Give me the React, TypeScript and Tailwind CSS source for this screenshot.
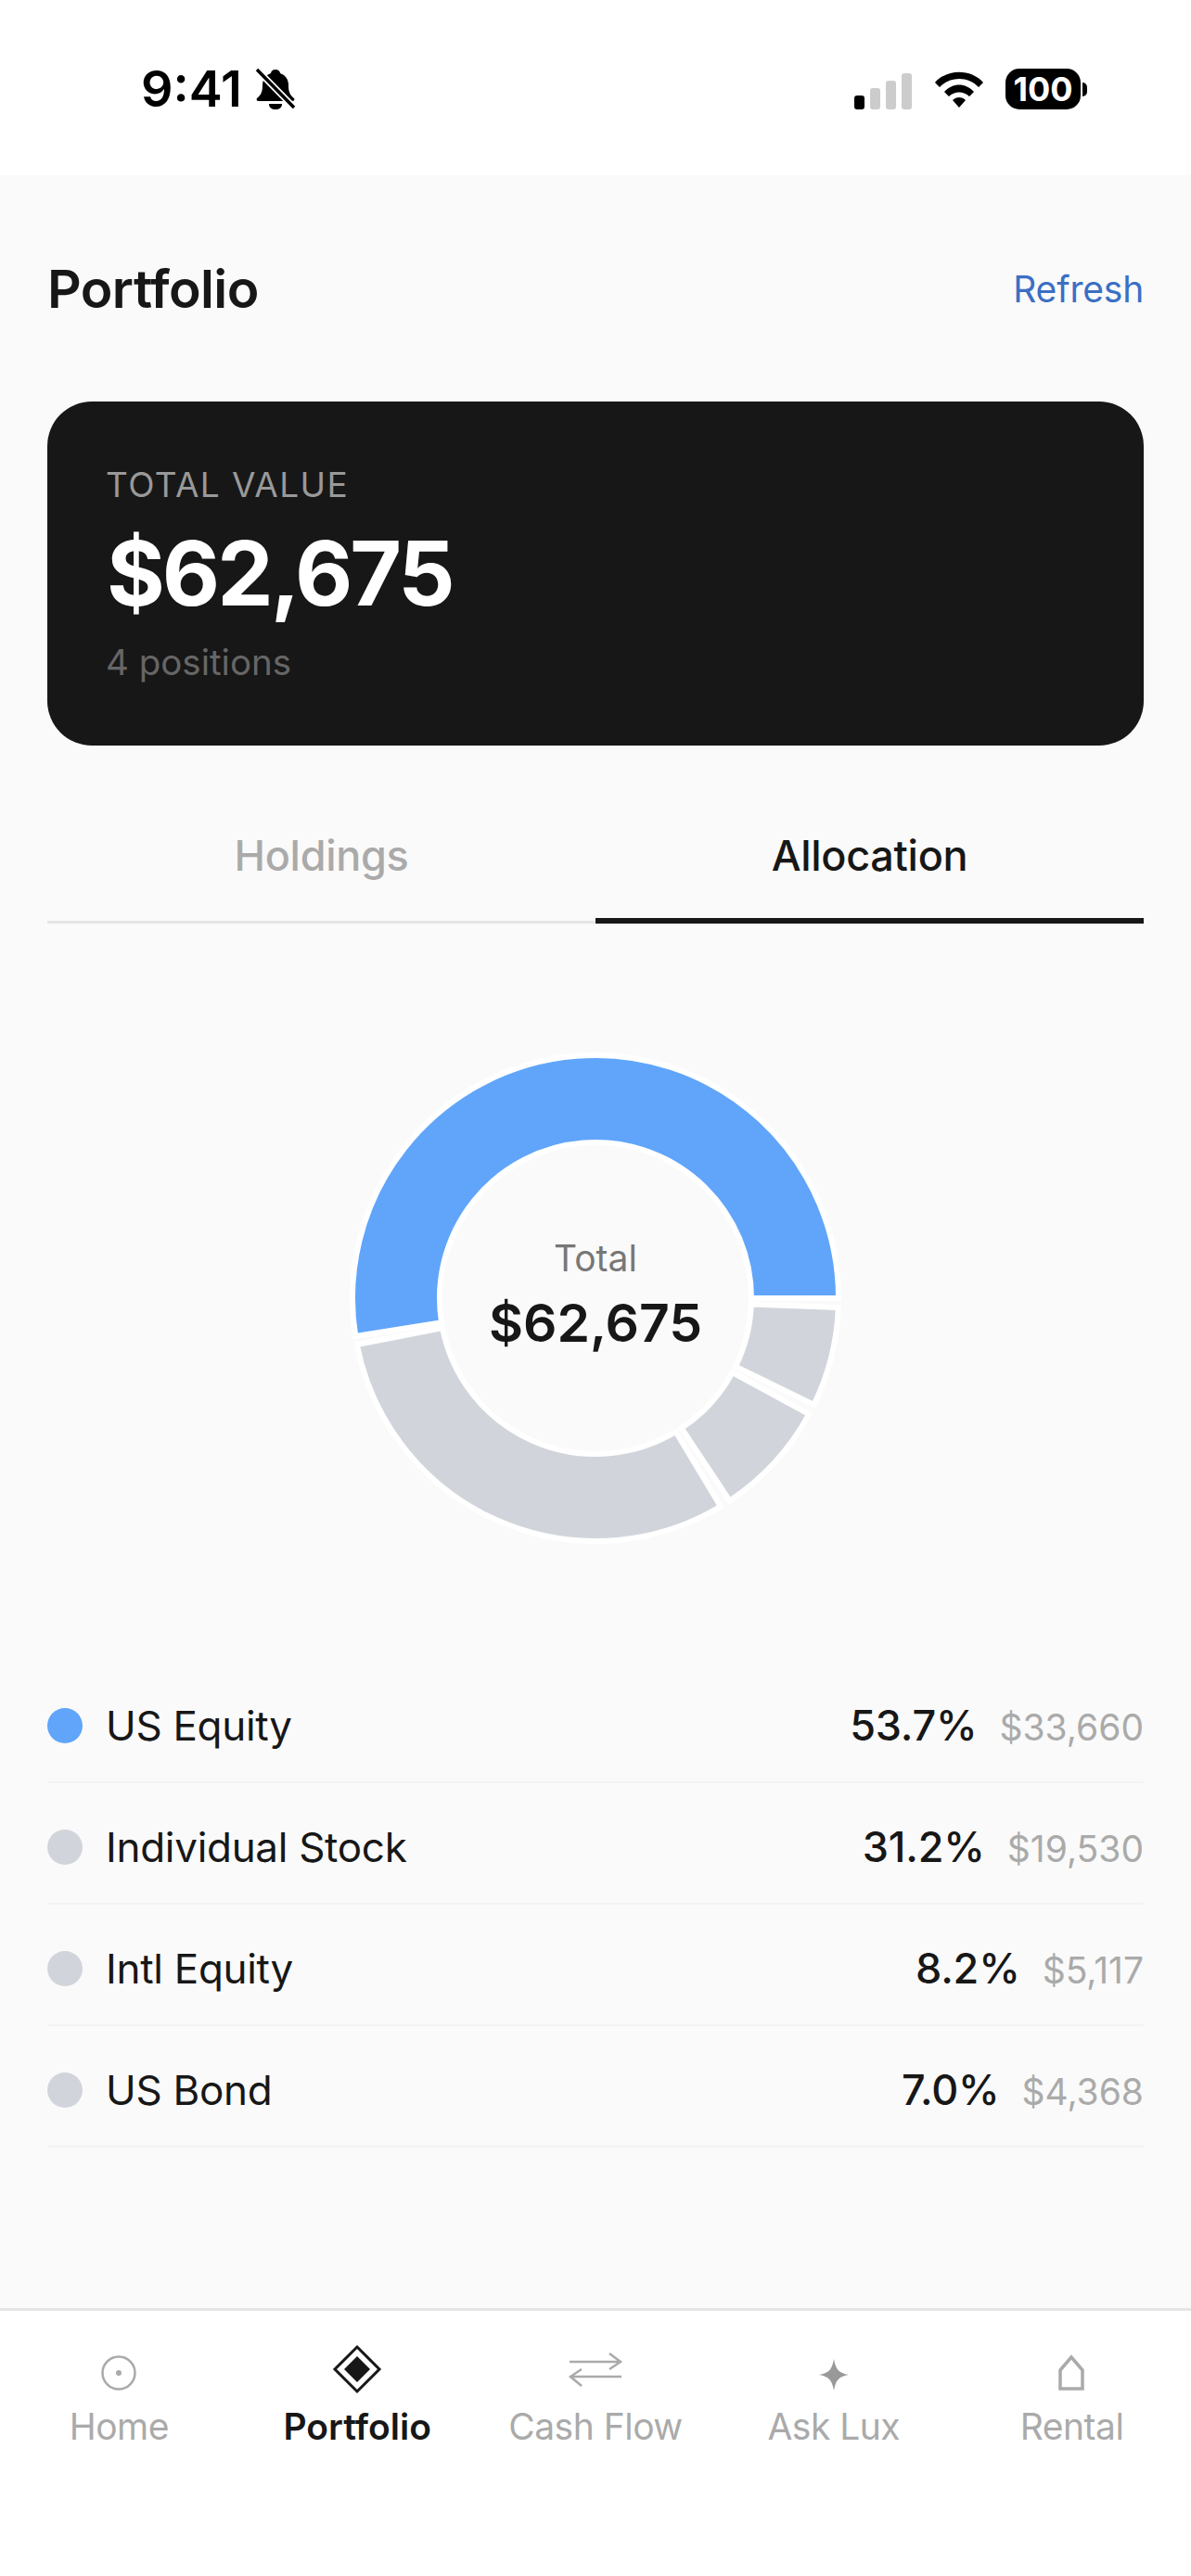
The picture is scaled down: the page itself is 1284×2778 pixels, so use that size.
const polar = (r: number, deg: number) => {
  const a = (deg * Math.PI) / 180
  return [284 + r * Math.cos(a), 284 - r * Math.sin(a)]
}

// counter-clockwise from 3 o'clock, like the chart in the app
const arc = (from: number, to: number) => {
  const R = 262
  const r = 168
  const large = to - from > 180 ? 1 : 0
  const [x1, y1] = polar(R, from)
  const [x2, y2] = polar(R, to)
  const [x3, y3] = polar(r, to)
  const [x4, y4] = polar(r, from)
  return `M${x1} ${y1}A${R} ${R} 0 ${large} 0 ${x2} ${y2}L${x3} ${y3}A${r} ${r} 0 ${large} 1 ${x4} ${y4}Z`
}

const segments = [
  { from: 0, to: 189, color: '#60a5fa' },
  { from: 191, to: 301, color: '#d1d5db' },
  { from: 303.5, to: 331.5, color: '#d1d5db' },
  { from: 334, to: 357.8, color: '#d1d5db' },
]

const rows = [
  { name: 'US Equity', pct: '53.7%', value: '$33,660', dot: 'bg-[#60a5fa]' },
  { name: 'Individual Stock', pct: '31.2%', value: '$19,530', dot: 'bg-[#d1d5db]' },
  { name: 'Intl Equity', pct: '8.2%', value: '$5,117', dot: 'bg-[#d1d5db]' },
  { name: 'US Bond', pct: '7.0%', value: '$4,368', dot: 'bg-[#d1d5db]' },
]

const StatusBar = () => (
  <div className="h-[189px] bg-white flex items-start justify-between pt-[70px] pl-[152px] pr-[112px] shrink-0">
    <div className="flex items-center gap-[14px] h-[52px]">
      <span className="text-[54px] font-semibold leading-none text-black">9:41</span>
      <svg width="44" height="46" viewBox="0 0 44 46">
        <path d="M22 2c-3 0-5 2-5 4-6 2-9 7-9 13 0 6-1 10-6 14-1 2 0 3 2 3h36c2 0 3-1 2-3-5-4-6-8-6-14 0-6-3-11-9-13 0-2-2-4-5-4z" fill="#000" />
        <path d="M15 39h14c0 4-3 6-7 6s-7-2-7-6z" fill="#000" />
        <path d="M2 2l40 41" stroke="#fff" strokeWidth="7" />
        <path d="M2 2l40 41" stroke="#000" strokeWidth="3.5" />
      </svg>
    </div>
    <div className="flex items-center h-[52px]">
      <div className="flex items-end gap-[6px] h-[40px] mt-[4px]">
        <div className="w-[11px] h-[15px] rounded-[3px] bg-black" />
        <div className="w-[11px] h-[23px] rounded-[3px] bg-[#cccccc]" />
        <div className="w-[11px] h-[31px] rounded-[3px] bg-[#cccccc]" />
        <div className="w-[11px] h-[39px] rounded-[3px] bg-[#cccccc]" />
      </div>
      <svg className="ml-[24px]" width="54" height="40" viewBox="0 0 54 40">
        <path d="M1 13C14 -2 40 -2 53 13l-5 5C37 6 17 6 6 18z" fill="#000" />
        <path d="M11 23c9-10 23-10 32 0l-5 5c-6-6-16-6-22 0z" fill="#000" />
        <path d="M20 32c4-4 10-4 14 0l-7 8z" fill="#000" />
      </svg>
      <div className="ml-[23px] w-[81px] h-[44px] rounded-[15px] bg-black flex items-center justify-center text-white text-[36px] font-bold leading-none">
        100
      </div>
      <div className="ml-[2px] w-[5px] h-[15px] rounded-r-full bg-black" />
    </div>
  </div>
)

const Donut = () => (
  <div className="relative w-[536px] h-[536px]">
    <svg viewBox="0 0 568 568" className="w-[568px] h-[568px] -m-[16px]">
      {segments.map((s) => (
        <path key={s.from} d={arc(s.from, s.to)} fill={s.color} stroke="#ffffff" strokeWidth="6" />
      ))}
    </svg>
    <div className="absolute inset-0 flex flex-col items-center justify-center pb-[6px]">
      <span className="text-[39px] leading-[48px] text-[#777777]">Total</span>
      <span className="text-[57px] leading-[68px] mt-[12px] font-semibold text-[#171717]">$62,675</span>
    </div>
  </div>
)

const NavIcon = ({ name }: { name: string }) => {
  if (name === 'Home')
    return (
      <svg width="60" height="70" viewBox="0 0 60 70">
        <circle cx="30" cy="37" r="17.5" fill="none" stroke="#aaaaaa" strokeWidth="2.5" />
        <circle cx="30" cy="37" r="3" fill="#aaaaaa" />
      </svg>
    )
  if (name === 'Portfolio')
    return (
      <svg width="60" height="70" viewBox="0 0 60 70">
        <path d="M30 9L54 33 30 57 6 33z" fill="none" stroke="#171717" strokeWidth="3" />
        <path d="M30 19L44 33 30 47 16 33z" fill="#171717" />
      </svg>
    )
  if (name === 'Cash Flow')
    return (
      <svg width="60" height="70" viewBox="0 0 60 70">
        <path d="M2 25h54M45 16l12 9-12 8M58 41H4M15 33L3 41l12 10" fill="none" stroke="#aaaaaa" strokeWidth="2.5" />
      </svg>
    )
  if (name === 'Ask Lux')
    return (
      <svg width="60" height="70" viewBox="0 0 60 70">
        <path d="M30 22C32 33 35 37 46 39 35 41 32 45 30 56 28 45 25 41 14 39 25 37 28 33 30 22z" fill="#999999" />
      </svg>
    )
  return (
    <svg width="60" height="70" viewBox="0 0 60 70">
      <path d="M29 20L17 34V54H41V34z" fill="none" stroke="#aaaaaa" strokeWidth="3.5" />
    </svg>
  )
}

const tabs = ['Home', 'Portfolio', 'Cash Flow', 'Ask Lux', 'Rental']

export default function App() {
  return (
    <div className="w-[1284px] h-[2778px] flex flex-col bg-[#fafafa]" style={{ fontFamily: 'Inter, sans-serif' }}>
      <StatusBar />
      <div className="flex-1 px-[51px]">
        <div className="flex items-center justify-between h-[86px] mt-[79px]">
          <h1 className="text-[57px] font-semibold leading-none tracking-[-0.6px] text-[#171717]">Portfolio</h1>
          <button className="text-[39px] leading-none tracking-[-0.2px] text-[#3b6fc4]">Refresh</button>
        </div>
        <div className="mt-[79px] h-[371px] rounded-[48px] bg-[#171717] pl-[64px] pt-[67px]">
          <div className="-ml-[1px] text-[37px] leading-[46px] tracking-[1.4px] text-[#999999]">TOTAL VALUE</div>
          <div className="text-[96px] leading-[110px] mt-[17px] font-bold tracking-[-3px] text-white">$62,675</div>
          <div className="-ml-[1px] text-[38.5px] leading-[46px] mt-[18px] text-[#666666]">4 positions</div>
        </div>
        <div className="flex h-[192px]">
          <div className="flex-1 flex items-center justify-center border-b-[3px] border-[#e5e5e5] text-[45px] font-medium tracking-[-0.3px] text-[#aaaaaa] pt-[48px]">
            Holdings
          </div>
          <div className="flex-1 flex items-center justify-center border-b-[6px] border-[#171717] text-[45px] font-medium tracking-[-0.3px] text-[#171717] pt-[51px]">
            Allocation
          </div>
        </div>
        <div className="flex justify-center mt-[136px]">
          <Donut />
        </div>
        <div className="mt-[124px]">
          {rows.map((r) => (
            <div key={r.name} className="h-[131px] flex items-center justify-between border-b-[2px] border-[#f3f3f3] pt-[9px]">
              <div className="flex items-center gap-[25px]">
                <div className={`w-[38px] h-[38px] rounded-full ${r.dot}`} />
                <span className="text-[44px] tracking-[-0.3px] text-[#171717]">{r.name}</span>
              </div>
              <div className="flex items-baseline gap-[24px]">
                <span className="text-[45px] font-medium tracking-[-0.2px] text-[#171717]">{r.pct}</span>
                <span className="text-[39px] text-[#aaaaaa]">{r.value}</span>
              </div>
            </div>
          ))}
        </div>
      </div>
      <div className="h-[289px] shrink-0 bg-white border-t-[3px] border-[#e5e5e5] flex pt-[30px]">
        {tabs.map((t) => (
          <div key={t} className="flex-1 flex flex-col items-center">
            <NavIcon name={t} />
            <span className={`mt-[1px] text-[39px] leading-[48px] ${t === 'Portfolio' ? 'font-semibold text-[#171717]' : 'tracking-[-0.5px] text-[#aaaaaa]'}`}>
              {t}
            </span>
          </div>
        ))}
      </div>
    </div>
  )
}
